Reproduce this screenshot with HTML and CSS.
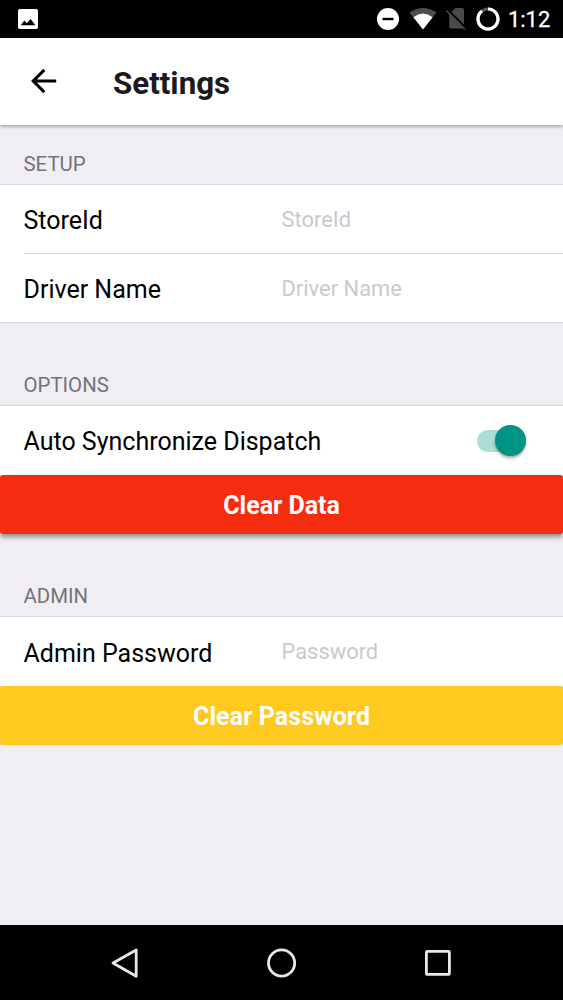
FILE: index.html
```html
<!DOCTYPE html>
<html lang="en">
<head>
<meta charset="utf-8">
<title>Settings</title>
<link rel="stylesheet" href="styles.css">
</head>
<body>
<div class="screen">
  <div class="status">
    <svg class="picture" width="20" height="20" viewBox="0 0 20 20"><rect width="20" height="20" rx="1.8" fill="#fff"/><path d="M2.8 16.3 6.3 11.4 8.7 14.2 12.7 9.9 17.3 16.3Z" fill="#000"/></svg>
    <div class="indicators">
      <svg width="22" height="22" viewBox="0 0 22 22"><circle cx="11" cy="11" r="11" fill="#fff"/><path d="M5.5 11h11" stroke="#000" stroke-width="2.4"/></svg>
      <svg class="wifi" width="28" height="22" viewBox="0 0 28 22"><path d="M.5 4.6Q14-4.4 27.5 4.6L14 21.5Z" fill="#4d4d4d"/><path d="M4.4 9.3Q14 1.9 23.6 9.3L14 21.5Z" fill="#fff"/></svg>
      <svg class="sim" width="20" height="22" viewBox="0 0 20 22"><path d="M3.2 6.4 9.2 0H16.2Q18 0 18 2V19.2Q18 20.4 16.8 20.4H4.6Q3.2 20.4 3.2 19Z" fill="#4a4a4a"/><path d="M1.5 1.5 20 20" stroke="#000" stroke-width="2.2"/><path d="M.4 2.6 18.8 21.2" stroke="#4a4a4a" stroke-width="1.6"/></svg>
      <svg class="battery" width="24" height="24" viewBox="0 0 24 24"><circle cx="12" cy="12" r="10" fill="none" stroke="#555" stroke-width="3.2"/><path d="M12 2A10 10 0 1 1 6 4" fill="none" stroke="#fff" stroke-width="3.2"/></svg>
      <span class="time">1:12</span>
    </div>
  </div>
  <header class="bar">
    <svg width="26" height="26" viewBox="0 0 26 26"><path d="M25.2 13H2.2M13.3 1.9 2.2 13 13.3 24.1" fill="none" stroke="#000" stroke-width="3"/></svg>
    <h1>Settings</h1>
  </header>
  <main>
    <h2 class="first">SETUP</h2>
    <div class="list">
      <div class="row"><label>StoreId</label><span class="hint">StoreId</span></div>
      <div class="row divided"><label>Driver Name</label><span class="hint">Driver Name</span></div>
    </div>
    <h2 class="options">OPTIONS</h2>
    <div class="list joined">
      <div class="row"><label>Auto Synchronize Dispatch</label><span class="switch"><span class="thumb"></span></span></div>
    </div>
    <div class="button red">Clear Data</div>
    <h2 class="admin">ADMIN</h2>
    <div class="list joined">
      <div class="row password"><label>Admin Password</label><span class="hint">Password</span></div>
    </div>
    <div class="button yellow">Clear Password</div>
  </main>
  <nav class="nav">
    <svg width="30" height="32" viewBox="0 0 30 32"><path d="M26.2 3V29.3L3 16Z" fill="none" stroke="#e9e7e9" stroke-width="2.8" stroke-linejoin="round"/></svg>
    <svg width="30" height="32" viewBox="0 0 30 32"><circle cx="14.6" cy="16" r="13.1" fill="none" stroke="#e9e7e9" stroke-width="2.8"/></svg>
    <svg width="30" height="32" viewBox="0 0 30 32"><rect x="3.4" y="4.4" width="23" height="23" rx=".8" fill="none" stroke="#e9e7e9" stroke-width="2.8"/></svg>
  </nav>
</div>
</body>
</html>
```
FILE: styles.css
```css
* { box-sizing: border-box; }
body { margin: 0; font-family: Roboto, sans-serif; background: #f0eef3; }
svg { display: block; flex: none; }
.screen { height: 1000px; display: flex; flex-direction: column; overflow: hidden; }
.status { height: 37.5px; flex: none; background: #000; display: flex; justify-content: space-between; align-items: center; padding: 0 13px 0 18px; }
.indicators { display: flex; align-items: center; color: #fff; }
.wifi { margin-left: 10px; }
.sim { margin-left: 9px; }
.battery { margin-left: 10px; }
.time { width: 42px; margin-left: 8px; padding-top: 2px; font-size: 21.9px; line-height: 26px; font-weight: 400; -webkit-text-stroke: .3px #fff; white-space: nowrap; }
.bar { height: 87.5px; flex: none; background: #fff; display: flex; align-items: center; padding-left: 31px; box-shadow: 0 1px 4px rgba(0,0,0,.4); z-index: 1; }
.bar h1 { margin: 6px 0 0 56px; font-size: 31.3px; line-height: 38px; font-weight: 700; color: #1b1b1d; }
main { flex: 1; }
h2 { margin: 0; padding: 0 0 7px 23.5px; font-size: 20.4px; line-height: 26px; font-weight: 400; color: #747377; display: flex; align-items: flex-end; }
.first { height: 59px; }
.options { height: 82px; }
.admin { height: 82px; }
.list { background: #fff; border-top: 1px solid #dad9de; border-bottom: 1px solid #dad9de; }
.joined { border-bottom: 0; }
.row { height: 69px; display: flex; align-items: center; margin-left: 23.5px; padding-right: 37px; font-size: 25px; color: #000; }
.row label { width: 258px; flex: none; white-space: nowrap; padding-top: 1px; }
.row:has(+ .divided) { height: 68px; padding-top: 1px; }
.divided { border-top: 1px solid #dad9de; padding-top: 1px; }
.password label { padding-top: 3px; }
.hint { font-size: 21.9px; color: #c9c9cd; }
.switch { margin-left: auto; width: 49px; height: 22px; border-radius: 11px; background: #a9dfd5; display: flex; align-items: center; justify-content: flex-end; }
.thumb { width: 31px; height: 31px; flex: none; border-radius: 50%; background: #009484; box-shadow: 0 2px 3px rgba(0,0,0,.35); }
.button { height: 59px; border-radius: 3px; color: #fff; font-size: 25px; font-weight: 700; display: flex; align-items: center; justify-content: center; padding-top: 2px; }
.red { background: #f52d10; box-shadow: 0 3px 5px rgba(0,0,0,.42); }
.yellow { letter-spacing: .1px; background: #ffca1f; box-shadow: 0 0 1px rgba(0,0,0,.25); }
.nav { height: 75px; flex: none; background: #000; display: flex; justify-content: space-between; align-items: center; padding: 0 110px; }
```
